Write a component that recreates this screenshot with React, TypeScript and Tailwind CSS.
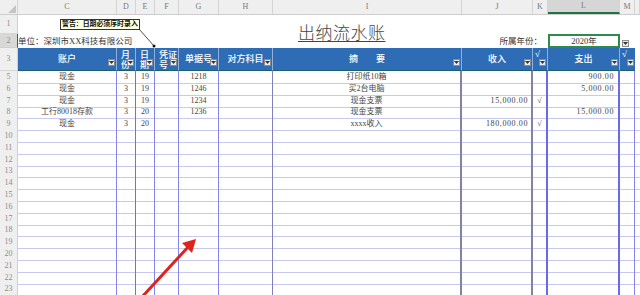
import React from "react";

const COLS =
  "grid grid-cols-[18px_99px_19px_19px_24px_40px_54px_189px_71px_15px_72px_15px_5px]";

const serif = { fontFamily: '"Liberation Serif", "Noto Sans CJK SC", serif' };

function Drop() {
  return (
    <span className="absolute right-[1px] bottom-[4px] w-[7px] h-[7px] bg-[#ececec] border border-[#8a8a8a] flex items-center justify-center">
      <svg width="5" height="3" viewBox="0 0 5 3">
        <polygon points="0,0 5,0 2.5,3" fill="#333" />
      </svg>
    </span>
  );
}

const letters = ["", "C", "D", "E", "F", "G", "H", "I", "J", "K", "L", "M", ""];

const dataBorders = [
  "",
  "border-r border-r-[#8585ea]",
  "border-r border-r-[#7878a8]",
  "border-r border-r-[#8585ea]",
  "border-r border-r-[#8585ea]",
  "border-r border-r-[#8585ea]",
  "border-r border-r-[#8080c0]",
  "border-r-2 border-r-[#8282a4]",
  "border-r-2 border-r-[#8282a4]",
  "border-r-2 border-r-[#6a6ae8]",
  "border-r-2 border-r-[#6a6ae8]",
  "border-r border-r-[#8585ea]",
  "",
];

type Row = {
  n: number;
  acct?: string;
  m?: string;
  d?: string;
  doc?: string;
  memo?: string;
  inc?: string;
  ck1?: string;
  out?: string;
};

const rows: Row[] = [
  { n: 5, acct: "现金", m: "3", d: "19", doc: "1218", memo: "打印纸10箱", out: "900.00" },
  { n: 6, acct: "现金", m: "3", d: "19", doc: "1246", memo: "买2台电脑", out: "5,000.00" },
  { n: 7, acct: "现金", m: "3", d: "19", doc: "1234", memo: "现金支票", inc: "15,000.00", ck1: "√" },
  { n: 8, acct: "工行80018存款", m: "3", d: "20", doc: "1236", memo: "现金支票", out: "15,000.00" },
  { n: 9, acct: "现金", m: "3", d: "20", memo: "xxxx收入", inc: "180,000.00", ck1: "√" },
];
for (let i = 10; i <= 23; i++) rows.push({ n: i });

function RowNum({ n, active }: { n: number | string; active?: boolean }) {
  return (
    <div
      className={
        "flex items-center justify-center text-[8px] text-[#8c8c8c] border-r border-b " +
        (active
          ? "bg-[#d8d8d8] border-r-[#217346] border-b-[#cfcfcf]"
          : "bg-[#efefef] border-r-[#cfcfcf] border-b-[#d6d6d6]")
      }
      style={{ fontFamily: '"Liberation Serif", serif' }}
    >
      {n}
    </div>
  );
}

export default function App() {
  return (
    <div className="relative w-[640px] h-[295px] overflow-hidden bg-white" style={serif}>
      {/* column letters */}
      <div className={COLS + " h-[15px] bg-[#efefef] border-b border-b-[#cdcdcd]"}>
        {letters.map((l, i) => (
          <div
            key={i}
            className={
              "flex items-center justify-center text-[8px] text-[#7a7a7a] border-r border-r-[#d4d4d4] " +
              (l === "L" ? "bg-[#d6d6d6] border-b-2 border-b-[#217346]" : "")
            }
          >
            {i === 0 ? (
              <svg width="8" height="8" viewBox="0 0 8 8" className="ml-[6px] mt-[3px]">
                <polygon points="8,0 8,8 0,8" fill="#c4c4c4" />
              </svg>
            ) : (
              l
            )}
          </div>
        ))}
      </div>

      {/* rows 1-2 */}
      <div className={COLS + " grid-rows-[19px_14px]"}>
        <div className="col-start-1 row-start-1 grid">
          <RowNum n={1} />
        </div>
        <div className="col-start-1 row-start-2 grid">
          <RowNum n={2} active />
        </div>
        <div className="col-start-2 col-span-12 row-start-1 row-span-2 pl-[280px] pt-[7px]">
          <span className="text-[17px] leading-none text-[#444] underline underline-offset-[2px] decoration-1 tracking-[0.5px] font-light">
            出纳流水账
          </span>
        </div>
        <div className="col-start-2 col-span-6 row-start-2 flex items-center text-[8.5px] text-[#333] whitespace-nowrap">
          单位：深圳市XX科技有限公司
        </div>
        <div className="col-start-8 col-span-3 row-start-2 flex items-center justify-end pr-[6px] text-[8.5px] text-[#333]">
          所属年份：
        </div>
        <div className="col-start-11 row-start-2 flex items-center justify-center border-2 border-[#2e8b4e] text-[8.5px] text-[#333] bg-white">
          2020年
        </div>
        <div className="col-start-12 row-start-2 relative">
          <span className="absolute left-[2px] top-[6px] w-[7px] h-[7px] bg-[#ececec] border border-[#8a8a8a] flex items-center justify-center">
            <svg width="5" height="3" viewBox="0 0 5 3">
              <polygon points="0,0 5,0 2.5,3" fill="#333" />
            </svg>
          </span>
        </div>
      </div>

      {/* header row 3 */}
      <div className={COLS + " h-[23px]"}>
        <RowNum n={3} />
        {[
          { t: "账户" },
          { t: "月\n份", two: true },
          { t: "日\n期", two: true },
          { t: "凭证\n号", two: true },
          { t: "单据号" },
          { t: "对方科目" },
          { t: "摘\u3000\u3000要" },
          { t: "收入" },
          { t: "√", top: true },
          { t: "支出" },
          { t: "√", top: true },
        ].map((h, i) => (
          <div
            key={i}
            className={
              "relative overflow-hidden bg-[#2e6db6] border-b border-b-[#1d5f6a] text-white font-medium text-[9px] leading-[10px] whitespace-pre " +
              (i < 10 ? "border-r border-r-[#8fb0dc] " : "") +
              (h.two
                ? "flex flex-col items-start justify-start pt-[2px] pl-[4px]"
                : h.top
                ? "flex items-start justify-start pt-[1px] pl-[2px]"
                : "flex items-center justify-center")
            }
          >
            {h.t}
            <Drop />
          </div>
        ))}
        <div className="bg-white" />
      </div>

      {/* data rows */}
      {rows.map((r) => {
        const cells: { v?: string; a: string; mono?: boolean }[] = [
          { v: r.acct, a: "justify-center" },
          { v: r.m, a: "justify-center" },
          { v: r.d, a: "justify-center" },
          { v: undefined, a: "" },
          { v: r.doc, a: "justify-center" },
          { v: undefined, a: "" },
          { v: r.memo, a: "justify-center" },
          { v: r.inc, a: "justify-end pr-[3px]", mono: true },
          { v: r.ck1, a: "justify-center" },
          { v: r.out, a: "justify-end pr-[4px]", mono: true },
          { v: undefined, a: "" },
          { v: undefined, a: "" },
        ];
        return (
          <div key={r.n} className={COLS + " h-[11.8px]"}>
            <RowNum n={r.n} />
            {cells.map((c, i) => (
              <div
                key={i}
                className={
                  "flex items-center overflow-hidden whitespace-nowrap text-[8px] leading-none text-[#444] border-b border-b-[#c8c8f0] " +
                  dataBorders[i + 1] +
                  " " +
                  c.a
                }
                style={c.mono ? { letterSpacing: "0.6px" } : undefined}
              >
                {c.v}
              </div>
            ))}
          </div>
        );
      })}

      {/* comment box */}
      <div className="absolute left-[60px] top-[19px] w-[80px] h-[11px] bg-[#ffffe1] border border-[#333] flex items-center justify-start pl-[1px] text-[6.9px] font-bold text-[#111] leading-none whitespace-nowrap overflow-hidden">
        警告：日期必须序时录入
      </div>

      {/* overlays: comment connector and red arrow */}
      <svg className="absolute left-0 top-0 pointer-events-none" width="640" height="295" viewBox="0 0 640 295">
        <line x1="139" y1="29" x2="154" y2="46" stroke="#222" strokeWidth="0.8" />
        <circle cx="154" cy="46" r="1.5" fill="#111" />
        <line x1="142" y1="297" x2="189" y2="246" stroke="#e0231c" strokeWidth="3" />
        <polygon points="196,239 182,243 192,253" fill="#e0231c" />
      </svg>
    </div>
  );
}
